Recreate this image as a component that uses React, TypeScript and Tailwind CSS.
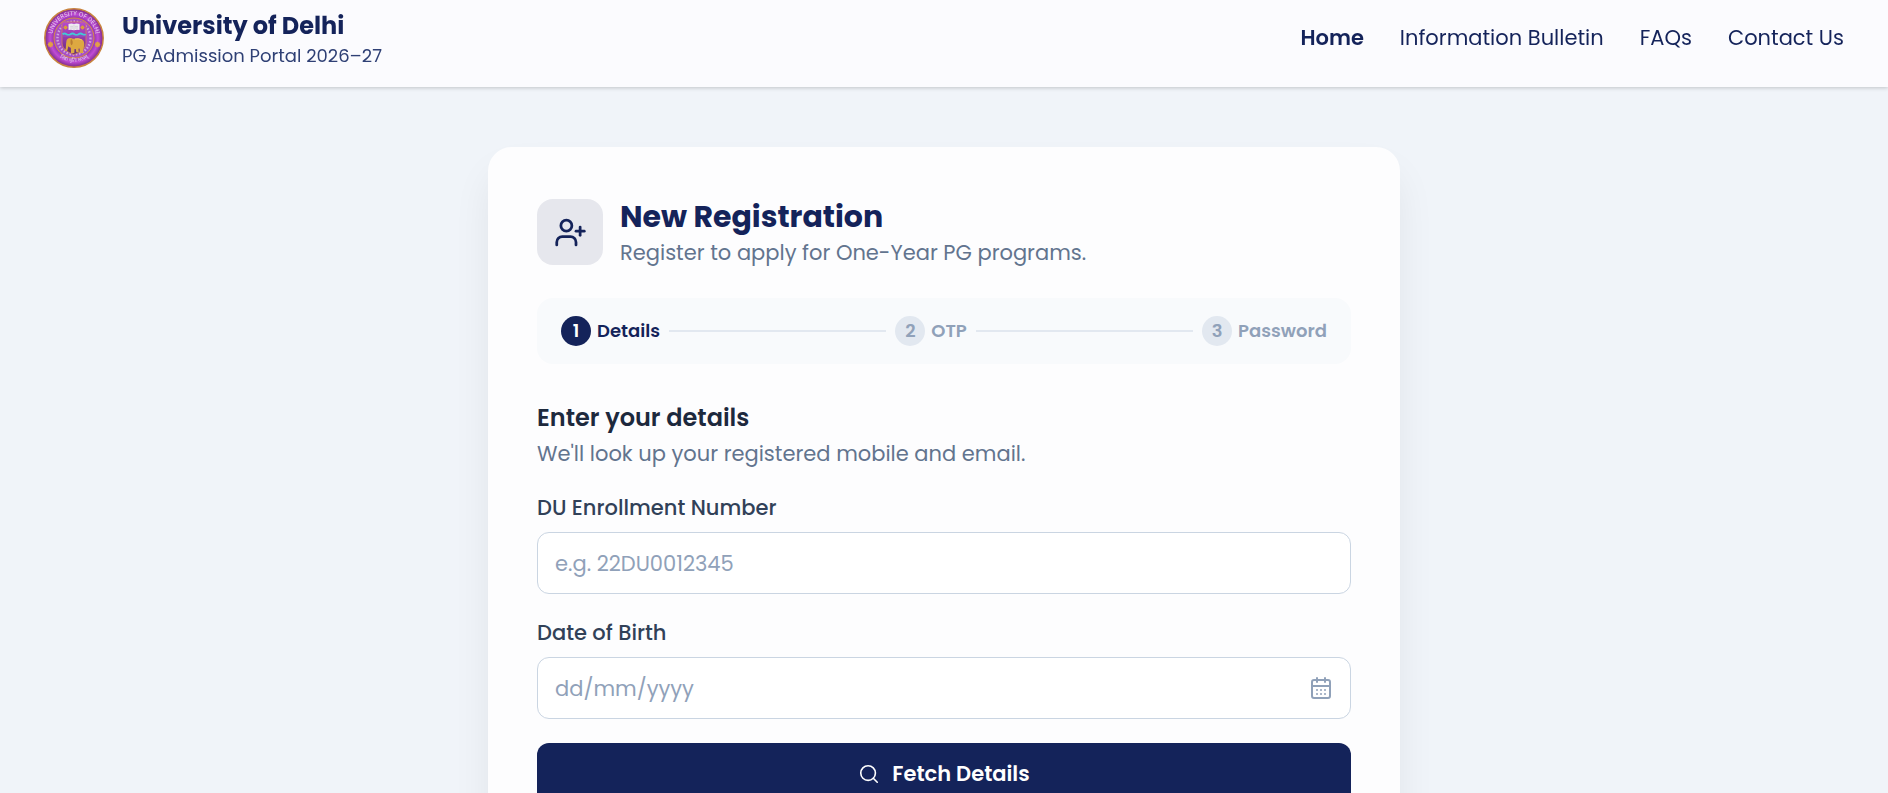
import { CalendarDays, Search, UserPlus } from "lucide-react";

const NAV_LINKS = [
  { label: "Home", active: true },
  { label: "Information Bulletin", active: false },
  { label: "FAQs", active: false },
  { label: "Contact Us", active: false },
];

function Crest() {
  return (
    <svg viewBox="0 0 60 60" className="size-15 shrink-0" role="img" aria-label="University crest">
      <defs>
        <radialGradient id="ring" cx="50%" cy="50%" r="50%">
          <stop offset="0.62" stopColor="#7f2c9c" />
          <stop offset="0.82" stopColor="#c04cd6" />
          <stop offset="1" stopColor="#7b2a86" />
        </radialGradient>
        <radialGradient id="disc" cx="50%" cy="50%" r="50%">
          <stop offset="0" stopColor="#a63fc4" />
          <stop offset="1" stopColor="#a851c2" />
        </radialGradient>
        <linearGradient id="shield" x1="0" y1="0" x2="0" y2="1">
          <stop offset="0" stopColor="#b64bd0" />
          <stop offset="0.55" stopColor="#8f37a8" />
          <stop offset="1" stopColor="#63306f" />
        </linearGradient>
        <path id="arc-top" d="M8.6 34.5A22 22 0 1 1 51.4 34.5" />
        <path id="arc-bottom" d="M11 45.5A26 26 0 0 0 49 45.5" />
      </defs>
      <circle cx="30" cy="30" r="29.2" fill="url(#ring)" stroke="#c98440" strokeWidth="1.5" />
      <circle cx="30" cy="30" r="20" fill="url(#disc)" stroke="#d98a45" strokeWidth="1" />
      <circle cx="30" cy="30" r="16.5" fill="none" stroke="#dcc3ea" strokeWidth="2.4" strokeDasharray="1.5 1.7" opacity="0.75" />
      <path d="M18 14H42V35C42 41 36 44.5 30 46.5C24 44.5 18 41 18 35Z" fill="url(#shield)" stroke="#d07a66" strokeWidth="0.9" />
      <path d="M24.5 16Q27.5 15 30 16Q32.5 15 35.5 16V22Q32.5 21.2 30 22.3Q27.5 21.2 24.5 22Z" fill="#f1eef2" />
      <path d="M30 16.5V22.2M26.2 18.3H29M31 18.3H34M26.2 20H29M31 20H34" stroke="#b6b0bd" strokeWidth="0.5" />
      <g fill="#d9983f">
        <path d="M21.5 17L22.4 18.6L24 19.5L22.4 20.4L21.5 22L20.6 20.4L19 19.5L20.6 18.6Z" />
        <path d="M38.5 17L39.4 18.6L41 19.5L39.4 20.4L38.5 22L37.6 20.4L36 19.5L37.6 18.6Z" />
        <rect x="20" y="18" width="3" height="3" />
        <rect x="37" y="18" width="3" height="3" />
      </g>
      <path d="M18.5 26.2Q20.5 24.8 22.5 26.2T26.5 26.2T30.5 26.2T34.5 26.2T38.5 26.2T41.5 26" fill="none" stroke="#43c9d6" strokeWidth="1.9" />
      <path d="M18.5 28H41.5" stroke="#8a62c9" strokeWidth="0.8" />
      <path
        d="M22.3 34C22.3 31 24.5 29.5 27 30C28.3 30.3 29 31 30 30.7C33 29.8 38 30 39.6 33C40.6 35 40.2 38 40.2 40.5L39.5 40.7L39.2 38V45H35.8L35.5 40.5L34.5 40.7L34.8 44.2H32.3L31.8 41H30.5L30.3 45H27L26.8 39.8C25.8 39.6 25 39 24.4 38.2C23.7 39.5 24 42.3 22.6 42.9C21.3 43.4 20.3 42.6 20.4 41.5L21.5 41.4C22.2 40 21.7 36.5 22.3 34Z"
        fill="#dda841"
      />
      <path d="M27 31C29 32 29.3 35.5 27.7 37.3C26.5 36.8 26 33.5 27 31Z" fill="#b97d31" />
      <path d="M31 31Q34.5 30.2 38 32" fill="none" stroke="#efcd72" strokeWidth="0.8" />
      <g fill="#e2a044">
        <path d="M6.5 33.3L7.5 35L9.3 36.5L7.5 38L6.5 39.7L5.5 38L3.4 36.5L5.5 35Z" />
        <rect x="4.4" y="34.4" width="4.2" height="4.2" />
        <path d="M53.5 33.3L54.5 35L56.6 36.5L54.5 38L53.5 39.7L52.5 38L50.7 36.5L52.5 35Z" />
        <rect x="51.4" y="34.4" width="4.2" height="4.2" />
      </g>
      <g fill="#e6d3ee" fontFamily="'Noto Sans', sans-serif">
        <text fontSize="6" textAnchor="middle">
          <textPath href="#arc-top" startOffset="50%">UNIVERSITY OF DELHI</textPath>
        </text>
        <text fontSize="5" textAnchor="middle">
          <textPath href="#arc-bottom" startOffset="50%">निष्ठा धृतिः सत्यम्</textPath>
        </text>
      </g>
    </svg>
  );
}

function Step({ number, label, active = false }: { number: number; label: string; active?: boolean }) {
  return (
    <li className="flex items-center gap-1.5">
      <span
        className={`flex size-[30px] items-center justify-center rounded-full text-lg font-semibold ${
          active ? "bg-[#14235a] text-white" : "bg-slate-200 text-slate-400"
        }`}
      >
        {number}
      </span>
      <span className={`text-lg font-semibold ${active ? "text-[#14235a]" : "text-slate-400"}`}>{label}</span>
    </li>
  );
}

function StepLine() {
  return <li aria-hidden="true" className="mx-[9px] h-0.5 flex-1 bg-slate-200" />;
}

const inputClass =
  "h-[62px] w-full rounded-xl border border-slate-300 bg-white px-[17px] text-[21px] text-slate-800 outline-none placeholder:text-slate-400";

export default function App() {
  return (
    <div className="h-screen overflow-y-auto bg-[#f0f4f9] font-['Poppins','Inter',sans-serif]">
      <header className="sticky top-0 z-10 flex items-start justify-between bg-[#fbfbfe] px-11 pt-2 pb-[17px] text-[#14235a] shadow-[0_1px_4px_rgba(0,0,0,0.2)]">
        <a href="#" className="flex items-start gap-[18px]">
          <Crest />
          <span className="flex flex-col pt-0.5">
            <span className="text-2xl leading-8 font-bold">University of Delhi</span>
            <span className="text-lg leading-7 text-[#2f4075]">PG Admission Portal 2026–27</span>
          </span>
        </a>
        <nav className="flex h-15 items-center gap-9 text-[21px]">
          {NAV_LINKS.map((link) => (
            <a key={link.label} href="#" className={link.active ? "font-semibold" : ""}>
              {link.label}
            </a>
          ))}
        </nav>
      </header>

      <main className="px-4 py-15">
        <section className="mx-auto max-w-[912px] rounded-3xl bg-[#fdfdfe] px-[49px] pt-[52px] pb-12 shadow-[0_24px_40px_-4px_rgba(0,0,0,0.08)]">
          <div className="flex items-start gap-[17px]">
            <div className="flex size-[66px] items-center justify-center rounded-2xl bg-[#e6e7ed] text-[#14235a]">
              <UserPlus size={33} />
            </div>
            <div>
              <h1 className="text-3xl leading-9 font-bold text-[#14235a]">New Registration</h1>
              <p className="text-[21px] leading-9 text-slate-500">Register to apply for One-Year PG programs.</p>
            </div>
          </div>

          <ol className="mt-[27px] flex h-[66px] items-center rounded-2xl bg-[#f8fafc] px-6">
            <Step number={1} label="Details" active />
            <StepLine />
            <Step number={2} label="OTP" />
            <StepLine />
            <Step number={3} label="Password" />
          </ol>

          <form className="mt-9" onSubmit={(e) => e.preventDefault()}>
            <h2 className="text-2xl leading-9 font-semibold text-slate-800">Enter your details</h2>
            <p className="text-[21px] leading-9 text-slate-500">We'll look up your registered mobile and email.</p>

            <label htmlFor="enrollment" className="mt-5 mb-2 block text-[21px] leading-8 font-medium text-slate-700">
              DU Enrollment Number
            </label>
            <input id="enrollment" type="text" placeholder="e.g. 22DU0012345" className={inputClass} />

            <label htmlFor="dob" className="mt-[23px] mb-2 block text-[21px] leading-8 font-medium text-slate-700">
              Date of Birth
            </label>
            <div className="relative">
              <input id="dob" type="text" placeholder="dd/mm/yyyy" className={inputClass} />
              <button
                type="button"
                aria-label="Open calendar"
                className="absolute inset-y-0 right-[18px] flex items-center text-slate-400"
              >
                <CalendarDays size={24} />
              </button>
            </div>

            <button
              type="submit"
              className="mt-6 flex h-[62px] w-full items-center justify-center gap-3 rounded-xl bg-[#14235a] text-[21px] font-semibold text-white"
            >
              <Search size={22} strokeWidth={1.75} />
              Fetch Details
            </button>
          </form>
        </section>
      </main>
    </div>
  );
}
